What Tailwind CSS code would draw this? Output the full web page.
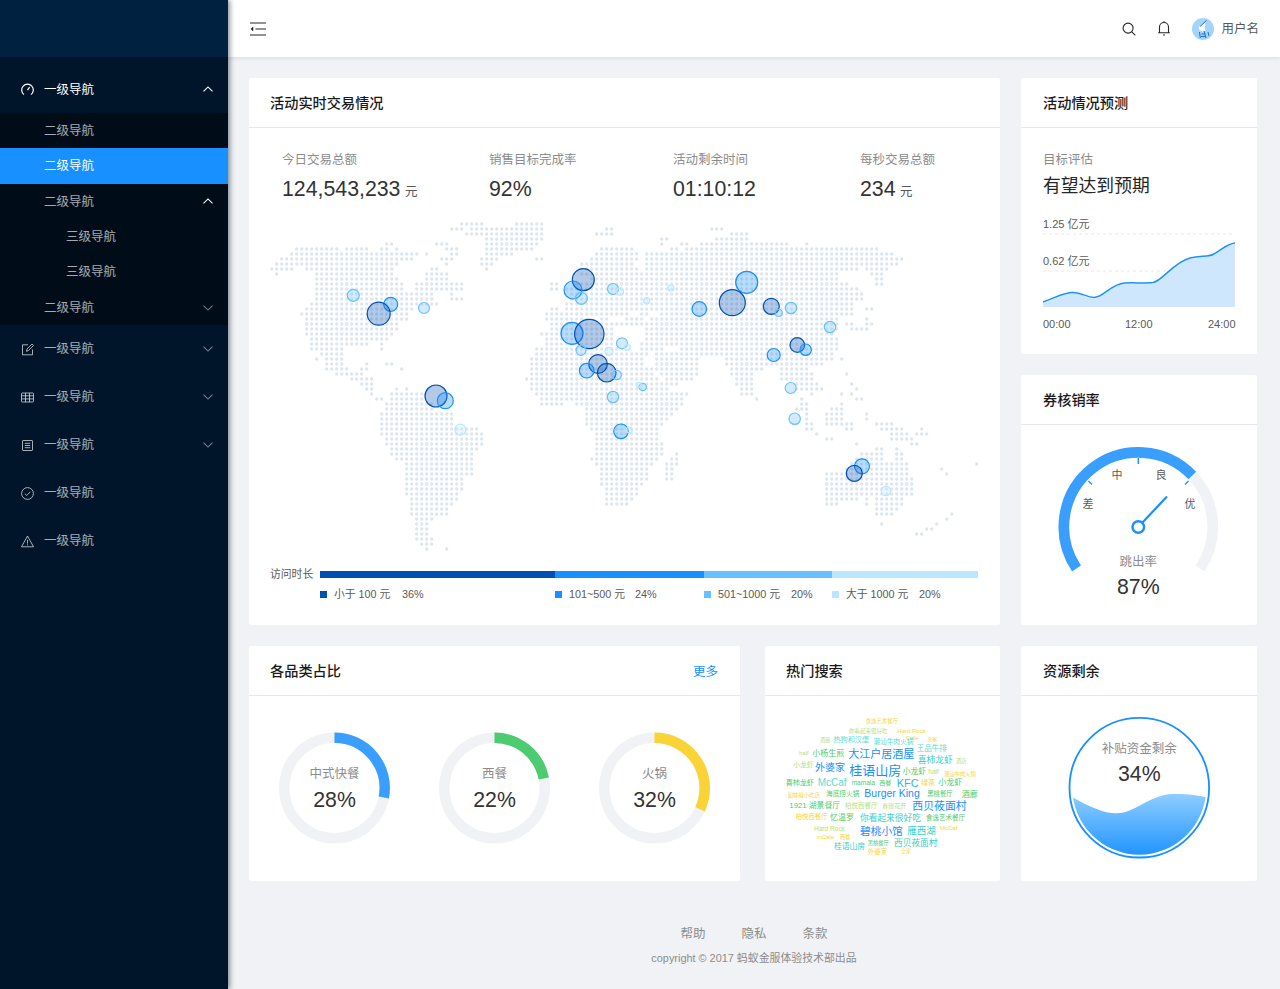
<!DOCTYPE html>
<html lang="zh-CN">
<head>
<meta charset="UTF-8">
<title>Dashboard</title>
<script src="https://cdn.jsdelivr.net/npm/@tailwindcss/browser@4"></script>
</head>
<body class="bg-[#f0f2f5] overflow-hidden [font-family:'Liberation_Sans','Noto_Sans_CJK_SC',sans-serif]">
<div class="flex h-[989px] w-[1280px]">

  <!-- Sidebar -->
  <aside class="relative z-10 w-[228px] shrink-0 bg-[#001529] text-[12.5px] text-white/65 shadow-[2px_0_5px_rgba(0,21,41,0.45)]">
    <div class="h-[57px] bg-[#002140]"></div>
    <nav class="pt-2">
      <div class="flex h-12 items-center pl-[21px] pr-[15px] text-white">
        <svg class="mr-[10px] w-[13px] h-[13px]" viewBox="0 0 13 13" fill="none" stroke="currentColor" stroke-width="1.2"><path d="M3 11.6A5.8 5.8 0 1 1 10 11.6"/><path d="M6.5 7.2 8.6 4.2"/></svg>
        <span class="flex-1 pt-[2px]">一级导航</span>
        <svg class="w-[10px] h-[6px]" viewBox="0 0 10 6" fill="none" stroke="currentColor" stroke-width="1.1"><path d="M.5 5.3 5 .9l4.500 4.400"/></svg>
      </div>
      <div class="bg-[#000c17]">
        <div class="flex h-[35.4px] items-center pl-11 pt-[1px]">二级导航</div>
        <div class="flex h-[35.4px] items-center pl-11 pt-[1px] bg-[#1890ff] text-white">二级导航</div>
        <div class="flex h-[35.4px] items-center pl-11 pr-[15px]">
          <span class="flex-1 pt-[1px]">二级导航</span>
          <svg class="w-[10px] h-[6px] text-white" viewBox="0 0 10 6" fill="none" stroke="currentColor" stroke-width="1.1"><path d="M.5 5.300 5 .9l4.500 4.400"/></svg>
        </div>
        <div class="flex h-[35.4px] items-center pl-[66px] pt-[1px]">三级导航</div>
        <div class="flex h-[35.4px] items-center pl-[66px] pt-[1px]">三级导航</div>
        <div class="flex h-[35.4px] items-center pl-11 pr-[15px]">
          <span class="flex-1 pt-[1px]">二级导航</span>
          <svg class="w-[10px] h-[6px] text-white/45" viewBox="0 0 10 6" fill="none" stroke="currentColor" stroke-width="1.1"><path d="M.5.7 5 5.100 9.500.7"/></svg>
        </div>
      </div>
      <div class="flex h-12 items-center pl-[21px] pr-[15px]">
        <svg class="mr-[10px] w-[13px] h-[13px]" viewBox="0 0 13 13" fill="none" stroke="currentColor" stroke-width="1"><path d="M7 1.800H1.500v10h10V6.500"/><path d="M5.500 8.300 6 6l5-5 1.500 1.500-5 5z"/></svg>
        <span class="flex-1 pt-[1px]">一级导航</span>
        <svg class="w-[10px] h-[6px] text-white/45" viewBox="0 0 10 6" fill="none" stroke="currentColor" stroke-width="1.1"><path d="M.5.7 5 5.100 9.500.7"/></svg>
      </div>
      <div class="flex h-12 items-center pl-[21px] pr-[15px]">
        <svg class="mr-[10px] w-[13px] h-[13px]" viewBox="0 0 13 13" fill="none" stroke="currentColor" stroke-width="1"><rect x=".5" y="2" width="12" height="9" rx=".8"/><path d="M.5 4.800h12M.5 7.900h12M4.500 2v9M8.500 2v9"/></svg>
        <span class="flex-1 pt-[1px]">一级导航</span>
        <svg class="w-[10px] h-[6px] text-white/45" viewBox="0 0 10 6" fill="none" stroke="currentColor" stroke-width="1.1"><path d="M.5.7 5 5.100 9.500.7"/></svg>
      </div>
      <div class="flex h-12 items-center pl-[21px] pr-[15px]">
        <svg class="mr-[10px] w-[13px] h-[13px]" viewBox="0 0 13 13" fill="none" stroke="currentColor" stroke-width="1"><rect x="1.500" y="1.500" width="10" height="10" rx=".6"/><path d="M3.800 4.300h5.400M3.800 6.500h5.400M3.800 8.700h5.400"/></svg>
        <span class="flex-1 pt-[1px]">一级导航</span>
        <svg class="w-[10px] h-[6px] text-white/45" viewBox="0 0 10 6" fill="none" stroke="currentColor" stroke-width="1.1"><path d="M.5.7 5 5.100 9.500.7"/></svg>
      </div>
      <div class="flex h-12 items-center pl-[21px] pr-[15px]">
        <svg class="mr-[10px] w-[13px] h-[13px]" viewBox="0 0 13 13" fill="none" stroke="currentColor" stroke-width="1"><circle cx="6.500" cy="6.500" r="5.900"/><path d="M3.800 6.700 5.700 8.500 9.300 4.800"/></svg>
        <span class="pt-[1px]">一级导航</span>
      </div>
      <div class="flex h-12 items-center pl-[21px] pr-[15px]">
        <svg class="mr-[10px] w-[13px] h-[13px]" viewBox="0 0 13 13" fill="none" stroke="currentColor" stroke-width="1"><path d="M6.500 1 12.500 11.800H.5z"/><path d="M6.500 4.800v3.800M6.500 9.400v1"/></svg>
        <span class="pt-[1px]">一级导航</span>
      </div>
    </nav>
  </aside>

  <div class="flex-1 min-w-0">
    <!-- Top bar -->
    <header class="flex h-[57px] items-center bg-white pl-[22px] pr-[21px] text-[12.5px] text-[#595959] shadow-[0_1px_4px_rgba(0,21,41,0.1)]">
      <svg class="w-4 h-[14px] text-[#262626]" viewBox="0 0 16 14" fill="none" stroke="currentColor" stroke-width="1.200"><path d="M0 1h16M5.500 7H16M0 13h16"/><path d="M3 5 .9 7 3 9z" fill="currentColor" stroke-width=".5"/></svg>
      <div class="flex-1"></div>
      <svg class="w-[14px] h-[14px] text-[#262626]" viewBox="0 0 14 14" fill="none" stroke="currentColor" stroke-width="1.100"><circle cx="6.100" cy="6.100" r="5"/><path d="M9.800 9.800 13.300 13.300"/></svg>
      <svg class="ml-[22px] w-[12px] h-[15px] text-[#262626]" viewBox="0 0 12 15" fill="none" stroke="currentColor" stroke-width="1.100"><path d="M1.500 11.800V6A4.500 4.500 0 0 1 10.500 6v5.800M.2 11.800h11.600M5 14h2M6 .3v1.200"/></svg>
      <svg class="ml-[22px] w-[22px] h-[22px]" viewBox="0 0 22 22"><circle cx="11" cy="11" r="11" fill="#a3d4fb"/><path d="M13.500 3.500 6.500 9l1 3 3 1.500 3-.5-.5-3.500z" fill="#fff"/><path d="M14.500 2.500 8 8.500M7.500 14l.8 6M12 13l2 7M16 14l1 4M9.500 16h4M9 18.500h5" stroke="#1e6fd0" stroke-width="1" fill="none"/></svg>
      <span class="ml-[7px] pt-[1px]">用户名</span>
    </header>

    <main class="pl-[21px] pr-[23px] pt-[21px]">
      <div class="flex gap-[21px] h-[547px]">
        <!-- Live trading card -->
        <section class="w-[751px] bg-white rounded-[2px]">
          <h2 class="flex h-[50px] items-center border-b border-[#e8e8e8] pl-[21px] pt-[2px] text-[14.2px] font-medium text-[#1a1a1a]">活动实时交易情况</h2>
          <div class="flex pl-[33px] pt-[24px] text-[12.5px] text-[#8c8c8c]">
            <div class="w-[207px]">
              <p class="leading-[17px]">今日交易总额</p>
              <p class="mt-[8px] leading-[25px] text-[#595959]"><span class="text-[21.3px] text-[#333]">124,543,233</span> <span class="ml-[1px]">元</span></p>
            </div>
            <div class="w-[184px]">
              <p class="leading-[17px]">销售目标完成率</p>
              <p class="mt-[8px] leading-[25px] text-[#333] text-[21.3px]">92%</p>
            </div>
            <div class="w-[187px]">
              <p class="leading-[17px]">活动剩余时间</p>
              <p class="mt-[8px] leading-[25px] text-[#333] text-[21.3px]">01:10:12</p>
            </div>
            <div>
              <p class="leading-[17px]">每秒交易总额</p>
              <p class="mt-[8px] leading-[25px] text-[#595959]"><span class="text-[21.3px] text-[#333]">234</span> <span class="ml-[1px]">元</span></p>
            </div>
          </div>

          <svg id="map" class="block mt-[10px]" width="751" height="340" viewBox="249 215 751 340"></svg>

          <div class="flex items-center mt-[11px] pl-[21px] text-[10.8px] text-[#595959]">
            <span class="w-[50px] leading-[16px]">访问时长</span>
            <div class="flex h-[7px] w-[658px]">
              <div class="w-[235px] bg-[#0050b3]"></div>
              <div class="w-[149px] bg-[#1890ff]"></div>
              <div class="w-[128px] bg-[#69c0ff]"></div>
              <div class="w-[146px] bg-[#bae7ff]"></div>
            </div>
          </div>
          <div class="flex mt-[3px] ml-[71px] text-[10.8px] leading-[18px] text-[#595959]">
            <div class="flex items-center w-[235px]"><i class="w-[7px] h-[7px] bg-[#0050b3] mr-[7px]"></i><span class="w-[68px]">小于 100 元</span><span>36%</span></div>
            <div class="flex items-center w-[149px]"><i class="w-[7px] h-[7px] bg-[#1890ff] mr-[7px]"></i><span class="w-[66px]">101~500 元</span><span>24%</span></div>
            <div class="flex items-center w-[128px]"><i class="w-[7px] h-[7px] bg-[#69c0ff] mr-[7px]"></i><span class="w-[73px]">501~1000 元</span><span>20%</span></div>
            <div class="flex items-center w-[146px]"><i class="w-[7px] h-[7px] bg-[#bae7ff] mr-[7px]"></i><span class="w-[73px]">大于 1000 元</span><span>20%</span></div>
          </div>
        </section>

        <div class="w-[236px] flex flex-col gap-[21px]">
          <!-- Forecast card -->
          <section class="h-[276px] bg-white rounded-[2px]">
            <h2 class="flex h-[50px] items-center border-b border-[#e8e8e8] pl-[22px] pt-[2px] text-[14.2px] font-medium text-[#1a1a1a]">活动情况预测</h2>
            <div class="pl-[22px] pt-[24px]">
              <p class="text-[12.5px] leading-[17px] text-[#8c8c8c]">目标评估</p>
              <p class="mt-[5px] text-[17.800px] leading-[24px] text-[#262626]">有望达到预期</p>
            </div>
            <svg class="block" width="236" height="156" viewBox="1021 198 236 156">
              <g font-size="11" fill="#595959">
                <text x="1043" y="228">1.25 亿元</text>
                <text x="1043" y="265">0.62 亿元</text>
                <text x="1043" y="328">00:00</text>
                <text x="1125" y="328">12:00</text>
                <text x="1208" y="328">24:00</text>
              </g>
              <path d="M1043 234H1235M1043 271H1235" stroke="#e8e8e8" stroke-width="1" stroke-dasharray="3 3" fill="none"/>
              <path d="M1043 303C1055 299 1062 294 1072 293.500C1082 293 1086 298.500 1094 298.500C1104 298.500 1110 285 1125 284C1135 283.500 1145 284.500 1153 283.500C1163 282 1172 264 1190 259C1200 256.500 1208 258 1213 255.500C1222 251 1226 245 1235 244V307H1043z" fill="#cfe7fd"/>
              <path d="M1043 302C1055 298 1062 293 1072 292.500C1082 292 1086 297.500 1094 297.500C1104 297.500 1110 284 1125 283C1135 282.500 1145 283.500 1153 282.500C1163 281 1172 263 1190 258C1200 255.500 1208 257 1213 254.500C1222 250 1226 244 1235 243" fill="none" stroke="#1890ff" stroke-width="1.500"/>
            </svg>
          </section>
          <!-- Gauge card -->
          <section class="h-[250px] bg-white rounded-[2px]">
            <h2 class="flex h-[50px] items-center border-b border-[#e8e8e8] pl-[22px] pt-[2px] text-[14.2px] font-medium text-[#1a1a1a]">券核销率</h2>
            <svg class="block" width="236" height="200" viewBox="1021 425 236 200">
              <path d="M1192.300 475.500A74.500 74.500 0 0 1 1200.100 568.400" fill="none" stroke="#f0f2f5" stroke-width="10.700"/>
              <path d="M1076.500 568.400A74.500 74.500 0 0 1 1192.300 475.500" fill="none" stroke="#3a9eff" stroke-width="10.700"/>
              <path d="M1138.300 458v6M1088.500 481l3.500 3.500M1188.500 481l-3.500 3.500" stroke="#1890ff" stroke-width="1.400"/>
              <g font-size="11" fill="#595959" text-anchor="middle" dominant-baseline="middle">
                <text x="1117" y="476">中</text>
                <text x="1161" y="476">良</text>
                <text x="1088" y="505">差</text>
                <text x="1190" y="505">优</text>
              </g>
              <path d="M1142.500 522.500 1167 496.500" stroke="#1890ff" stroke-width="2.200"/>
              <circle cx="1138.300" cy="527" r="5.800" fill="#fff" stroke="#1890ff" stroke-width="2.400"/>
              <text x="1138.300" y="563" font-size="12.500" fill="#8c8c8c" text-anchor="middle" dominant-baseline="middle">跳出率</text>
              <text x="1138.300" y="594" font-size="21.300" fill="#333" text-anchor="middle">87%</text>
            </svg>
          </section>
        </div>
      </div>

      <div class="flex mt-[21px] h-[235px]">
        <!-- Category share card -->
        <section class="w-[491px] bg-white rounded-[2px]">
          <div class="flex h-[50px] items-center justify-between border-b border-[#e8e8e8] pl-[21px] pr-[22px] pt-[2px]">
            <h2 class="text-[14.2px] font-medium text-[#1a1a1a]">各品类占比</h2>
            <a class="pt-[2px] text-[12.5px] text-[#1890ff]">更多</a>
          </div>
          <div class="flex gap-[48px] pl-[30px] pt-[36px]">
            <svg width="112" height="112" viewBox="0 0 112 112" fill="none">
              <circle cx="55.500" cy="56" r="50.200" stroke="#f0f2f5" stroke-width="10.500"/>
              <path d="M55.500 5.800A50.200 50.200 0 0 1 104.800 65.400" stroke="#3a9eff" stroke-width="10.500"/>
              <text x="55.500" y="43" font-size="12.500" fill="#8c8c8c" text-anchor="middle" dominant-baseline="middle">中式快餐</text>
              <text x="55.500" y="75" font-size="21.300" fill="#333" text-anchor="middle">28%</text>
            </svg>
            <svg width="112" height="112" viewBox="0 0 112 112" fill="none">
              <circle cx="55.500" cy="56" r="50.200" stroke="#f0f2f5" stroke-width="10.500"/>
              <path d="M55.500 5.800A50.200 50.200 0 0 1 104.800 46.600" stroke="#4ccb70" stroke-width="10.500"/>
              <text x="55.500" y="43" font-size="12.500" fill="#8c8c8c" text-anchor="middle" dominant-baseline="middle">西餐</text>
              <text x="55.500" y="75" font-size="21.300" fill="#333" text-anchor="middle">22%</text>
            </svg>
            <svg width="112" height="112" viewBox="0 0 112 112" fill="none">
              <circle cx="55.500" cy="56" r="50.200" stroke="#f0f2f5" stroke-width="10.500"/>
              <path d="M55.500 5.800A50.200 50.200 0 0 1 101 77.200" stroke="#fad337" stroke-width="10.500"/>
              <text x="55.500" y="43" font-size="12.500" fill="#8c8c8c" text-anchor="middle" dominant-baseline="middle">火锅</text>
              <text x="55.500" y="75" font-size="21.300" fill="#333" text-anchor="middle">32%</text>
            </svg>
          </div>
        </section>

        <!-- Hot search card -->
        <section class="ml-[25px] w-[235px] bg-white rounded-[2px]">
          <h2 class="flex h-[50px] items-center border-b border-[#e8e8e8] pl-[21px] pt-[2px] text-[14.2px] font-medium text-[#1a1a1a]">热门搜索</h2>
          <svg class="block" width="235" height="185" viewBox="765 695 235 185">
            <g dominant-baseline="middle">
              <text x="865.700" y="721" font-size="5.400" fill="#fad337">食逸艺术餐厅</text>
              <text x="849" y="730.300" font-size="5.500" fill="#b5e07c">你看起来很好吃</text>
              <text x="897.300" y="730.300" font-size="6" fill="#fad337">Hard Rock</text>
              <text x="905.700" y="737" font-size="6" fill="#fad337">Cafe</text>
              <text x="927.300" y="738.300" font-size="5" fill="#fad337">全家</text>
              <text x="820" y="739.700" font-size="5.300" fill="#b5e07c">酒廊</text>
              <text x="833.300" y="739" font-size="7.200" fill="#5cdbd3">热狗和汉堡</text>
              <text x="873.300" y="741.700" font-size="6.700" fill="#5cdbd3">潮汕牛肉火锅</text>
              <text x="916.700" y="748" font-size="7.500" fill="#5cdbd3">王品牛排</text>
              <text x="799" y="752.700" font-size="6" fill="#b5e07c">half</text>
              <text x="812.300" y="752.700" font-size="8" fill="#4ccb70">小杨生煎</text>
              <text x="848.300" y="754" font-size="11" fill="#1890ff">大江户居酒屋</text>
              <text x="917.700" y="760" font-size="8.750" fill="#36cfc9">喜柿龙虾</text>
              <text x="956" y="760.700" font-size="5.300" fill="#b5e07c">酒店</text>
              <text x="793.300" y="764.700" font-size="6.700" fill="#b5e07c">小龙虾</text>
              <text x="815" y="767" font-size="10" fill="#1890ff">外婆家</text>
              <text x="849.300" y="770.300" font-size="13" fill="#1890ff">桂语山房</text>
              <text x="902.700" y="771.300" font-size="7.800" fill="#4ccb70">小龙虾</text>
              <text x="928.300" y="771.300" font-size="6.500" fill="#b5e07c">half</text>
              <text x="944" y="773.300" font-size="5.300" fill="#fad337">潮汕牛肉火锅</text>
              <text x="785.700" y="782.300" font-size="7" fill="#4ccb70">喜柿龙虾</text>
              <text x="817.700" y="782.300" font-size="10" fill="#5cdbd3">McCaf</text>
              <text x="851.700" y="782.300" font-size="6.500" fill="#4ccb70">mamala</text>
              <text x="879.300" y="782.300" font-size="6" fill="#4ccb70">西餐</text>
              <text x="896.700" y="783.300" font-size="11" fill="#36b5d8">KFC</text>
              <text x="921" y="782.300" font-size="7" fill="#fad337">绿茶</text>
              <text x="938.300" y="782.300" font-size="8" fill="#4ccb70">小龙虾</text>
              <text x="787.700" y="794.300" font-size="5.400" fill="#fad337">如妹椒小吃店</text>
              <text x="826" y="793.700" font-size="6.700" fill="#4ccb70">海底捞火锅</text>
              <text x="864.300" y="793" font-size="10.500" fill="#1890ff">Burger King</text>
              <text x="927.300" y="793.700" font-size="6.300" fill="#4ccb70">黑桃餐厅</text>
              <text x="961.700" y="793.700" font-size="8" fill="#4ccb70">酒廊</text>
              <text x="789.300" y="805" font-size="7.800" fill="#4ccb70">1921 湖景餐厅</text>
              <text x="845" y="805" font-size="6.500" fill="#b5e07c">柏悦西餐厅</text>
              <text x="882.300" y="805" font-size="6" fill="#b5e07c">春瑶花开</text>
              <text x="912.300" y="806.300" font-size="10.900" fill="#1890ff">西贝莜面村</text>
              <text x="795.700" y="816.700" font-size="6.400" fill="#fad337">柏悦西餐厅</text>
              <text x="830" y="816.700" font-size="8" fill="#4ccb70">忆温罗</text>
              <text x="860" y="817.300" font-size="8.700" fill="#36cfc9">你看起来很好吃</text>
              <text x="926" y="817.700" font-size="6.500" fill="#4ccb70">食逸艺术餐厅</text>
              <text x="814" y="828.300" font-size="6.500" fill="#b5e07c">Hard Rock</text>
              <text x="940" y="827.700" font-size="6" fill="#fad337">McCaf</text>
              <text x="860" y="831" font-size="10.700" fill="#1890ff">碧桃小馆</text>
              <text x="907.300" y="830" font-size="9.500" fill="#36cfc9">雁西湖</text>
              <text x="816.700" y="836.300" font-size="6" fill="#fad337">mCafe</text>
              <text x="840" y="836.300" font-size="5.300" fill="#fad337">西餐</text>
              <text x="834" y="846.300" font-size="7.750" fill="#36cfc9">桂语山房</text>
              <text x="867.700" y="842.300" font-size="5.300" fill="#4ccb70">黑桃餐厅</text>
              <text x="894" y="843" font-size="8.700" fill="#36cfc9">西贝莜面村</text>
              <text x="867.700" y="851" font-size="6.500" fill="#fad337">外婆家</text>
              <text x="900.700" y="851" font-size="5.200" fill="#fad337">全家</text>
            </g>
          </svg>
        </section>

        <!-- Remaining resources card -->
        <section class="ml-[21px] w-[236px] bg-white rounded-[2px]">
          <h2 class="flex h-[50px] items-center border-b border-[#e8e8e8] pl-[22px] pt-[2px] text-[14.2px] font-medium text-[#1a1a1a]">资源剩余</h2>
          <svg class="block" width="236" height="185" viewBox="1021 696 236 185">
            <defs>
              <linearGradient id="wave" x1="0" y1="0" x2="0" y2="1"><stop offset="0" stop-color="#8fcdff"/><stop offset="1" stop-color="#1890ff"/></linearGradient>
              <clipPath id="liquid"><circle cx="1139.300" cy="787.700" r="67"/></clipPath>
            </defs>
            <circle cx="1139.300" cy="787.700" r="69.800" fill="none" stroke="#1890ff" stroke-width="1.800"/>
            <path clip-path="url(#liquid)" d="M1072 797C1090 807 1104 813.500 1117 813.300C1135 813 1150 794.500 1173 794C1188 793.700 1198 795.500 1208 797.500V860H1072z" fill="url(#wave)"/>
            <text x="1139.300" y="750" font-size="12.500" fill="#8c8c8c" text-anchor="middle" dominant-baseline="middle">补贴资金剩余</text>
            <text x="1139.300" y="781" font-size="21.300" fill="#333" text-anchor="middle">34%</text>
          </svg>
        </section>
      </div>
    </main>

    <footer class="mt-[44px] text-center text-[#8c8c8c]">
      <div class="flex justify-center gap-9 text-[12.5px] leading-[18px]">
        <a>帮助</a><a>隐私</a><a>条款</a>
      </div>
      <p class="mt-[7px] text-[10.9px] leading-[16px]">copyright © 2017 蚂蚁金服体验技术部出品</p>
    </footer>
  </div>
</div>

<script>
  // dot map: one string per row, runs of columns on a 5px grid
  const rows = [
    '38-42,49-54','36-38,40-54,67-68,88-90','39-54,65-68,92-95','43-54,78-79,89-95',
    '23-24,33-35,43-53,78,82-83,86-103,107','5-13,15-19,22-23,25,35-37,43-52,66-72,80-81,83-121',
    '4-29,31,36-37,43-48,65-73,75-124','2-28,34-36,42-45,53-54,64-73,75-125,126','1-25,35,42-44,62-72,75-125',
    '0-4,7-24,32-33,43,63-73,75-117,119-123','1,9-24,31-35,62-113,120-122','9-25,31-35,64-113,121-122',
    '9-26,29-38,56-57,61-115,121-122','9-26,29-38,56-57,59-117','9-32,36,60-118','9-32,36-38,60-118',
    '8-33,59-116','7-28,56-57,59-116,119-120','6-27,55-71,74-75,78-116','7-27,55-63,66-67,71-74,76-113,119',
    '7-25,56-113,115-116,119-120','7-25,56-68,75-113,116-119','7-24,54-68,75-112','8-23,55-68,75-113',
    '8-19,22,55-68,74-113','8-14,22,53-69,74-78,82-113','10-14,53-75,77-112','9,11-14,52-74,77-85,91-112,114',
    '11-14,19,23-24,52-74,77-85,91-110','11-15,18-19,26,52-85,92-98,102-107','13-18,52-76,78-85,92-96,102-108,115',
    '16-20,51-77,79-84,93-96,102-108','18-20,52-81,93-96,105-109,116','19-20,25,27,52-79,94-96,105-110,117',
    '20,24-30,53-83,94-96,108,114,116','21-22,24-30,54-82,97,106,117-118','23-32,54-58,61-82,106-107,114',
    '23-32,63-81,105-107,112-114','22-36,63-80,107,111-114,119','22-36,63-79,107,111-114,119',
    '22-36,63-78,107-108,111-116,121-124','22-41,64-77,107-108,115-116,122-126,130','22-42,65-77,109,124-127,129-131',
    '23-42,65-77,111-112,124-128','23-42,65-78,117,128-129','24-41,65-78,121-122,125','24-40,65-78,81,118-122,125-126',
    '25-40,64-77,80-81,117-122,125-126','27-40,65-76,79-81,116-127,141','27-40,66-75,79-80,115-127,134',
    '27-40,66-75,79-80,111-127,135','27-38,66-75,79-80,111-128','27-38,66-74,111-128','27-38,67-73,111-128',
    '27-37,67-73,111-128','28-37,67-72,111-117,119,121-126','28-36,67-71,111-113,119,121-126','28-35,121-125',
    '28-35,121-124,136','29-32,135','29-31,122,133','29-31,131-132','29-31,129-130','29-32','30-32','31,35'
  ];
  // x, y, radius, kind
  const bubbles = [
    [353.3,295.3,6,2],[390.7,304.3,7,1],[378.7,313.7,11.5,0],[424,308,5.5,2],[583.3,279.7,11,0],[573,290,9,1],
    [581.3,298.3,6,2],[613,289,5.5,2],[620,291.7,3.5,3],[572,333.3,11,1],[589.3,334,14.7,0],[581,350.3,5,2],
    [609,351.3,4,3],[622,343.3,5.5,2],[627.3,347.3,3,3],[606.7,372.7,9.3,0],[598,364,9.3,0],[586.7,370.7,7.3,1],
    [616.7,375,4.7,2],[613,397,5.7,2],[621,431.3,7.3,1],[629.3,430,3,3],[436,396,11,0],[445.3,400.7,8,1],
    [460.3,429.7,5.5,3],[746.7,282.3,11,1],[732.3,302.7,13,0],[699.3,309,7.3,1],[771.3,306.3,8,0],[778.7,313,3.5,2],
    [791,308,5.7,2],[830,327,5.7,2],[797.3,345,7.3,0],[805.7,349.7,5.7,1],[773.7,355,6.5,1],[790.7,388,5.5,2],
    [794.7,418.7,5.7,2],[862,466.3,7.5,1],[854.3,473.3,8,0],[886,491,4.7,3],[671,288,3,3],[646.7,300.7,3,3],
    [642.7,387,3.7,2],[639,385,2.5,3]
  ];
  const colors = ['#0050b3','#1890ff','#69c0ff','#bae7ff'];
  const map = document.getElementById('map');
  const add = (attrs) => {
    const c = document.createElementNS('http://www.w3.org/2000/svg', 'circle');
    for (const k in attrs) c.setAttribute(k, attrs[k]);
    map.appendChild(c);
  };
  rows.forEach((row, r) => {
    row.split(',').forEach((run) => {
      const [a, b] = run.split('-').map(Number);
      for (let c = a; c <= (b === undefined ? a : b); c++) {
        add({ cx: 271.7 + c * 5, cy: 224 + r * 5, r: 1.65, fill: '#dde5ee' });
      }
    });
  });
  bubbles.forEach(([x, y, rad, kind]) => {
    add({ cx: x, cy: y, r: rad, fill: colors[kind], 'fill-opacity': 0.3, stroke: colors[kind], 'stroke-width': 1.2 });
  });
</script>
</body>
</html>
